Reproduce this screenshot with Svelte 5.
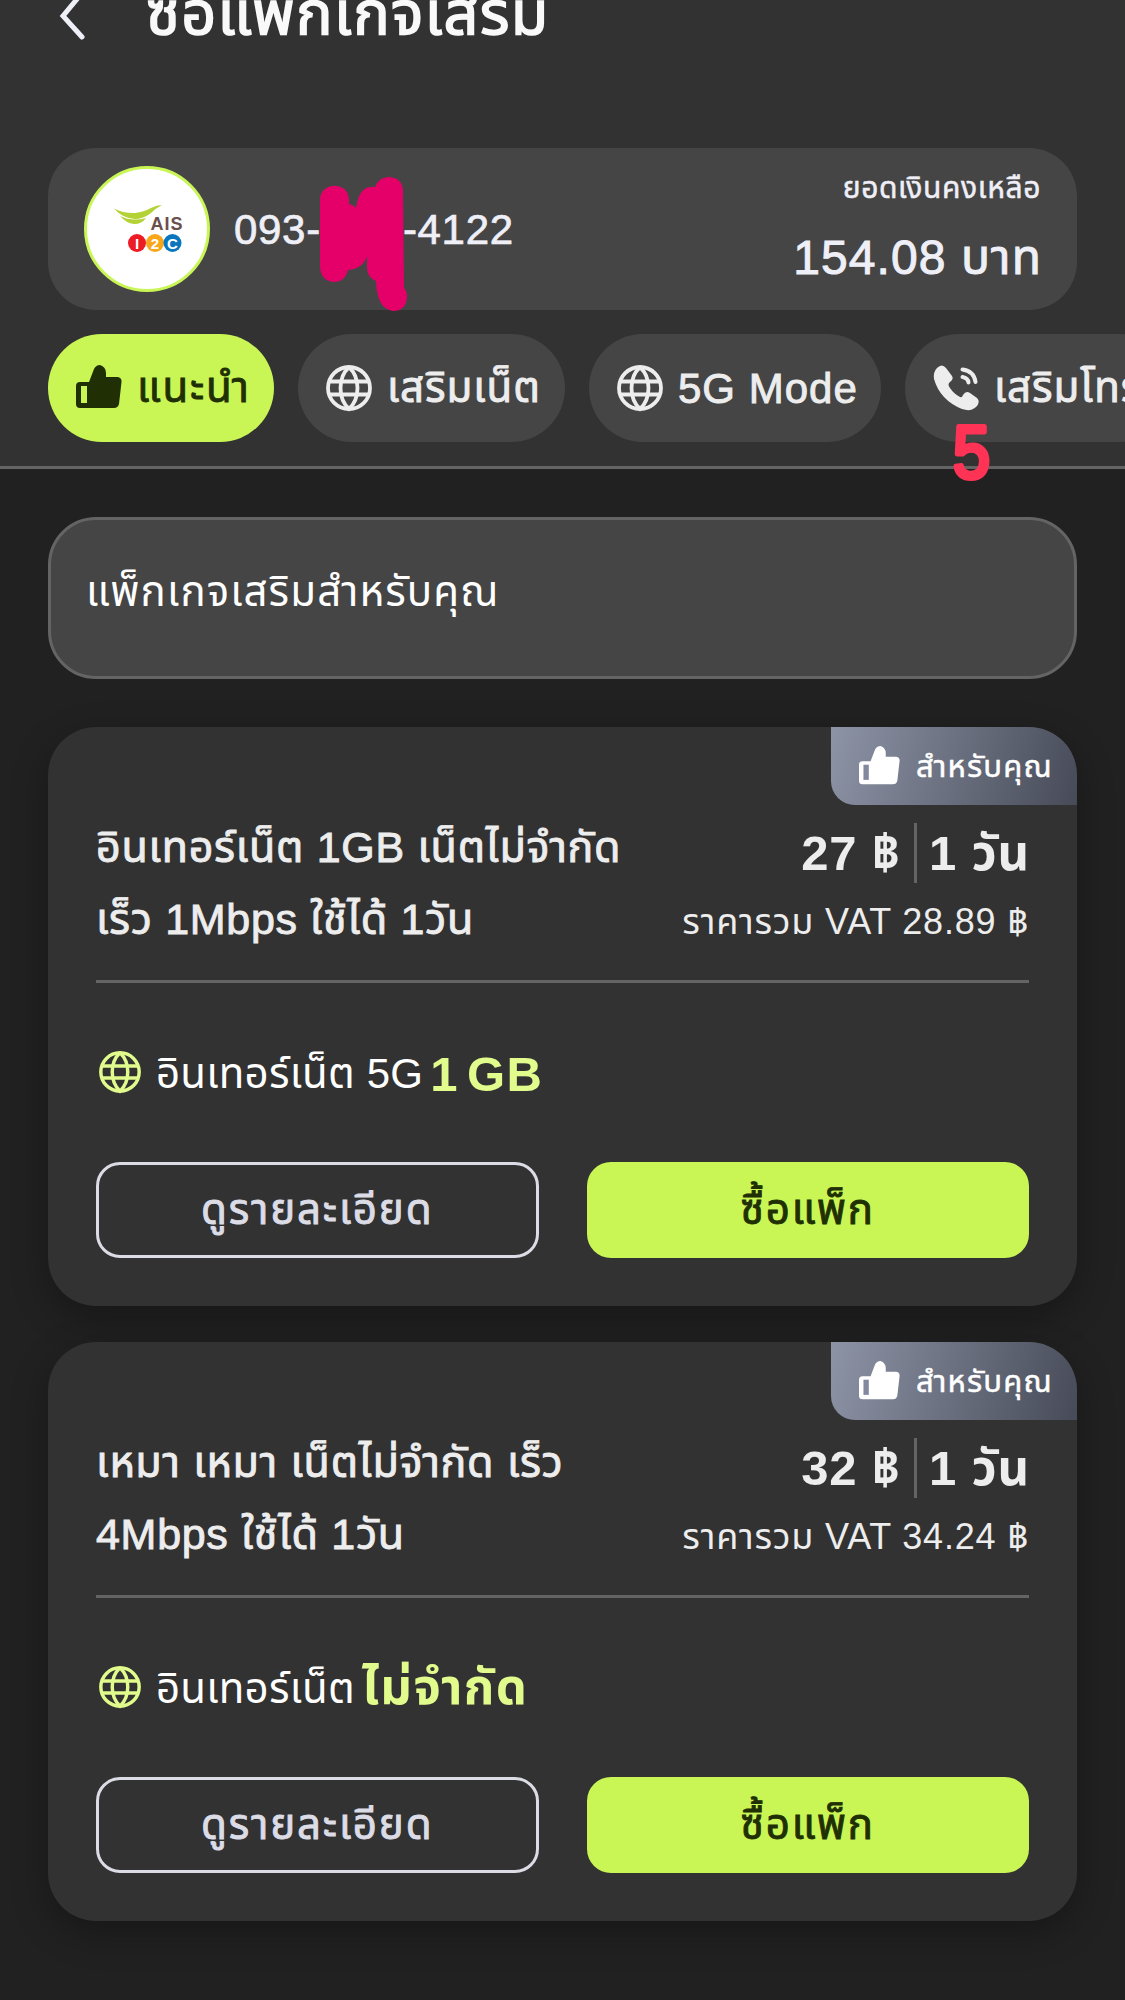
<script lang="ts">
	type Pack = {
		title: string[];
		price: string;
		vat: string;
		feature: string;
		amount: string;
	};

	const tabs = [
		{ icon: 'thumb', label: 'แนะนำ', width: 226 },
		{ icon: 'globe', label: 'เสริมเน็ต', width: 267 },
		{ icon: 'globe', label: '5G Mode', width: 292 },
		{ icon: 'phone', label: 'เสริมโทร', width: 270 }
	];

	const packs: Pack[] = [
		{
			title: ['อินเทอร์เน็ต 1GB เน็ตไม่จำกัด', 'เร็ว 1Mbps ใช้ได้ 1วัน'],
			price: '27',
			vat: '28.89',
			feature: 'อินเทอร์เน็ต 5G',
			amount: '1 GB'
		},
		{
			title: ['เหมา เหมา เน็ตไม่จำกัด เร็ว', '4Mbps ใช้ได้ 1วัน'],
			price: '32',
			vat: '34.24',
			feature: 'อินเทอร์เน็ต',
			amount: 'ไม่จำกัด'
		}
	];
</script>

{#snippet icon(name: string)}
	<svg class="icon" viewBox="0 0 46 46" fill="none" stroke="currentColor" aria-hidden="true">
		{#if name === 'thumb'}
			<path
				d="M13 17L18 4Q20 0 24 0Q30 2 30 8V12H42Q46 13 45.500 17L43 39Q42 43 38 43H4Q0 43 0 39V21Q0 17 4 17H13Z"
				fill="currentColor"
				stroke="none"
			/>
			<path class="cuff" d="M5 21H11V38H5Z" stroke="none" />
		{:else if name === 'globe'}
			<g stroke-width="3.800">
				<circle cx="23" cy="23" r="21" />
				<path d="M23 2Q14.500 10 14.500 23T23 44Q31.500 36 31.500 23T23 2" />
				<path d="M4 16.500H42M4 29.500H42" />
			</g>
		{:else}
			<path
				d="M4 3Q9-2 13 3L19 11Q21 14 17 17Q14 19 17 23Q21 29 27 32Q29 33 30 30Q33 25 37 28L44 33Q48 37 43 42Q38 47 29 44Q7 35 1 14Q0 7 4 3Z"
				fill="currentColor"
				stroke="none"
			/>
			<path d="M29.500 4.500Q41 6 42.500 17M29.500 12Q35 13 35.500 17.500" stroke-width="4" stroke-linecap="round" />
		{/if}
	</svg>
{/snippet}

<div class="page">
	<header>
		<div class="topbar">
			<svg class="back" width="30" height="54" viewBox="0 0 30 54" aria-hidden="true">
				<path d="M25 5L6 28L25 49" fill="none" stroke="#efeff7" stroke-width="5" stroke-linecap="round" />
			</svg>
			<h1>ซื้อแพ็กเกจเสริม</h1>
		</div>

		<section class="account">
			<svg class="logo" width="126" height="126" viewBox="0 0 126 126" aria-label="AIS">
				<circle cx="63" cy="63" r="61.500" fill="#fff" stroke="#c9f655" stroke-width="3" />
				<path d="M30 42.500Q40 47.500 51 47Q60 46 67 42Q73 39 78 39Q72 42 67 47Q59 53 51 53Q38 52 30 42.500Z" fill="#b2d235" />
				<path d="M36 50Q48 56 62 52Q58 58 50 58Q42 57 36 50Z" fill="#b2d235" />
				<text x="66.500" y="64" font-size="18" font-weight="700" fill="#6b4f4b" textLength="32">AIS</text>
				<circle cx="53" cy="77" r="9" fill="#ed1c24" />
				<circle cx="71" cy="77" r="9" fill="#f9a61a" />
				<circle cx="88.500" cy="77" r="9" fill="#0a76bd" />
				<g font-size="15" font-weight="700" fill="#fff" text-anchor="middle">
					<text x="53" y="82.500">I</text>
					<text x="71" y="82.500">2</text>
					<text x="88.500" y="82.500">C</text>
				</g>
			</svg>
			<p class="phone">
				<span>093-</span>
				<span class="hidden-digits">
					<svg width="88" height="136" viewBox="319 176 88 136" aria-hidden="true">
						<path
							d="M319 200C319 181 348 181 348 200V204Q353 205 355 208Q358 188 369 187L374 187Q378 177 388 177Q402 178 402 192L403 288Q406 291 406 297Q405 311 392 311Q376 309 375 281Q366 277 366 268V256Q362 269 347 270Q344 282 333 282Q319 281 319 265Z"
							fill="#e50069"
						/>
					</svg>
				</span>
				<span>-4122</span>
			</p>
			<div class="balance">
				<span class="balance-label">ยอดเงินคงเหลือ</span>
				<strong>154.08 บาท</strong>
			</div>
		</section>

		<nav>
			{#each tabs as tab, i}
				<button class="tab" class:active={i === 0} style:width="{tab.width}px">
					{@render icon(tab.icon)}
					<span>{tab.label}</span>
				</button>
			{/each}
			<svg class="mark" width="60" height="90" viewBox="0 0 60 90">
				<text x="4.500" y="74" transform="scale(0.9 1)">5</text>
			</svg>
		</nav>
	</header>

	<main>
		<div class="intro">แพ็กเกจเสริมสำหรับคุณ</div>

		{#each packs as pack}
			<article class="pack">
				<div class="badge">
					{@render icon('thumb')}
					<span>สำหรับคุณ</span>
				</div>
				<div class="summary">
					<h2>
						{#each pack.title as line}
							<span>{line}</span>
						{/each}
					</h2>
					<div class="cost">
						<div class="price">
							<span>{pack.price} ฿</span>
							<i></i>
							<span>1 วัน</span>
						</div>
						<div class="vat">ราคารวม VAT {pack.vat} ฿</div>
					</div>
				</div>
				<div class="feature">
					{@render icon('globe')}
					<span>{pack.feature}</span>
					<strong>{pack.amount}</strong>
				</div>
				<div class="actions">
					<button class="details">ดูรายละเอียด</button>
					<button class="buy">ซื้อแพ็ก</button>
				</div>
			</article>
		{/each}
	</main>
</div>

<style>
	:global(body) {
		background: #212121;
	}

	.page {
		width: 1125px;
		height: 2000px;
		overflow: hidden;
		background: #212121;
		color: #ededed;
		font-family: 'Liberation Sans', 'Noto Sans Thai', sans-serif;
		font-size: 42px;
	}

	.page * {
		box-sizing: border-box;
	}

	h1,
	h2,
	p {
		margin: 0;
		font-weight: 400;
	}

	button {
		font: inherit;
		padding: 0;
		border: 0;
		white-space: nowrap;
	}

	.icon {
		flex: none;
		width: 46px;
		height: 46px;
		overflow: visible;
	}

	header {
		height: 469px;
		padding: 0 48px;
		background: #323232;
		border-bottom: 3px solid #646464;
	}

	.topbar {
		height: 148px;
		display: flex;
		align-items: flex-start;
		padding-left: 9px;
	}

	.back {
		margin-top: -12px;
	}

	h1 {
		margin: -25px 0 0 59px;
		color: #f9f9f9;
		font-size: 61px;
		line-height: 76px;
		letter-spacing: 1.3px;
		-webkit-text-stroke: 1.6px;
		white-space: nowrap;
	}

	.account {
		height: 162px;
		display: flex;
		align-items: center;
		padding: 0 36px;
		border-radius: 48px;
		background: #454545;
		color: #efeff7;
	}

	.phone {
		display: flex;
		margin: 2px 0 0 24px;
		line-height: 50px;
		letter-spacing: 0.7px;
		-webkit-text-stroke: 0.7px;
	}

	.hidden-digits {
		position: relative;
		width: 82px;
	}

	.hidden-digits svg {
		position: absolute;
		left: -1px;
		top: -29px;
	}

	.balance {
		height: 162px;
		margin-left: auto;
		display: flex;
		flex-direction: column;
		align-items: flex-end;
		padding-top: 16px;
		white-space: nowrap;
		letter-spacing: 0.6px;
		-webkit-text-stroke: 0.5px;
	}

	.balance-label {
		font-size: 30px;
		line-height: 48px;
	}

	.balance strong {
		margin-top: 10px;
		margin-right: -1px;
		font-size: 48px;
		font-weight: 400;
		line-height: 72px;
		letter-spacing: 1.1px;
		-webkit-text-stroke: 1px;
	}

	nav {
		position: relative;
		display: flex;
		gap: 24px;
		width: 1077px;
		margin-top: 24px;
	}

	.tab {
		flex: none;
		display: flex;
		align-items: center;
		gap: 15px;
		height: 108px;
		padding-left: 28px;
		border-radius: 54px;
		background: #454545;
		color: #ededed;
		letter-spacing: 1px;
		-webkit-text-stroke: 0.9px;
	}

	.tab span {
		padding-top: 2px;
	}

	.tab.active {
		background: #c9f655;
		color: #203004;
		letter-spacing: 1.8px;
	}

	.tab .cuff {
		fill: #c9f655;
	}

	.mark {
		position: absolute;
		left: 901px;
		top: 70px;
		overflow: visible;
	}

	.mark text {
		fill: #ff3355;
		stroke: #ff3355;
		stroke-width: 5px;
		stroke-linejoin: round;
		font-size: 74px;
	}

	main {
		display: flex;
		flex-direction: column;
		gap: 36px;
		padding: 48px;
	}

	.intro {
		height: 162px;
		margin-bottom: 12px;
		padding: 36px 35px;
		border: 3px solid #646464;
		border-radius: 48px;
		background: #454545;
		color: #fff;
		line-height: 72px;
		letter-spacing: 1.15px;
	}

	.pack {
		height: 579px;
		padding: 0 48px;
		border-radius: 48px;
		background: #323232;
		box-shadow: 0 12px 36px rgba(0, 0, 0, 0.3);
	}

	.badge {
		display: flex;
		align-items: center;
		gap: 16px;
		width: 246px;
		height: 78px;
		margin: 0 -48px 0 auto;
		padding-left: 28px;
		border-radius: 0 48px 0 24px;
		background: linear-gradient(105deg, #8d94a6, #474b58);
		color: #fff;
		font-size: 31px;
		white-space: nowrap;
		letter-spacing: 1.2px;
		-webkit-text-stroke: 0.5px;
	}

	.badge span {
		padding-top: 3px;
	}

	.badge .icon {
		width: 41px;
		height: 41px;
	}

	.badge .cuff {
		fill: #8288a0;
	}

	.summary {
		display: flex;
		justify-content: space-between;
		height: 178px;
		border-bottom: 3px solid #646464;
	}

	h2 {
		display: flex;
		flex-direction: column;
		padding-top: 6px;
		font-size: 43px;
		line-height: 72px;
		letter-spacing: 0.7px;
		white-space: nowrap;
		-webkit-text-stroke: 0.9px;
	}

	.cost {
		display: flex;
		flex-direction: column;
		align-items: flex-end;
		padding-top: 18px;
		white-space: nowrap;
	}

	.price {
		display: flex;
		align-items: center;
		height: 60px;
		margin-right: -1px;
		font-size: 49px;
		font-weight: 700;
		letter-spacing: 0.8px;
	}

	.price span {
		padding-top: 3px;
	}

	.price i {
		width: 3px;
		height: 60px;
		margin: 0 12px 0 13px;
		background: #646464;
	}

	.vat {
		margin-top: 12px;
		font-size: 36px;
		line-height: 54px;
		letter-spacing: 0.8px;
	}

	.feature {
		display: flex;
		align-items: center;
		height: 179px;
		color: #fff;
		white-space: nowrap;
	}

	.feature .icon {
		width: 42px;
		height: 42px;
		margin: -2px 15px 0 3px;
		color: #e1fb8c;
	}

	.feature span {
		padding-top: 4px;
		letter-spacing: 0.2px;
	}

	.feature strong {
		margin-left: 7px;
		padding-top: 2px;
		color: #e1fb8c;
		font-size: 49px;
		letter-spacing: 1.5px;
		word-spacing: -7px;
	}

	.actions {
		display: grid;
		grid-template-columns: 1fr 1fr;
		gap: 48px;
	}

	.actions button {
		height: 96px;
		border-radius: 24px;
		padding-top: 2px;
		letter-spacing: 1.9px;
		-webkit-text-stroke: 0.9px;
	}

	.details {
		border: 3px solid #dcdce6;
		background: transparent;
		color: #dcdce6;
	}

	.buy {
		background: #c9f655;
		color: #203004;
	}
</style>
